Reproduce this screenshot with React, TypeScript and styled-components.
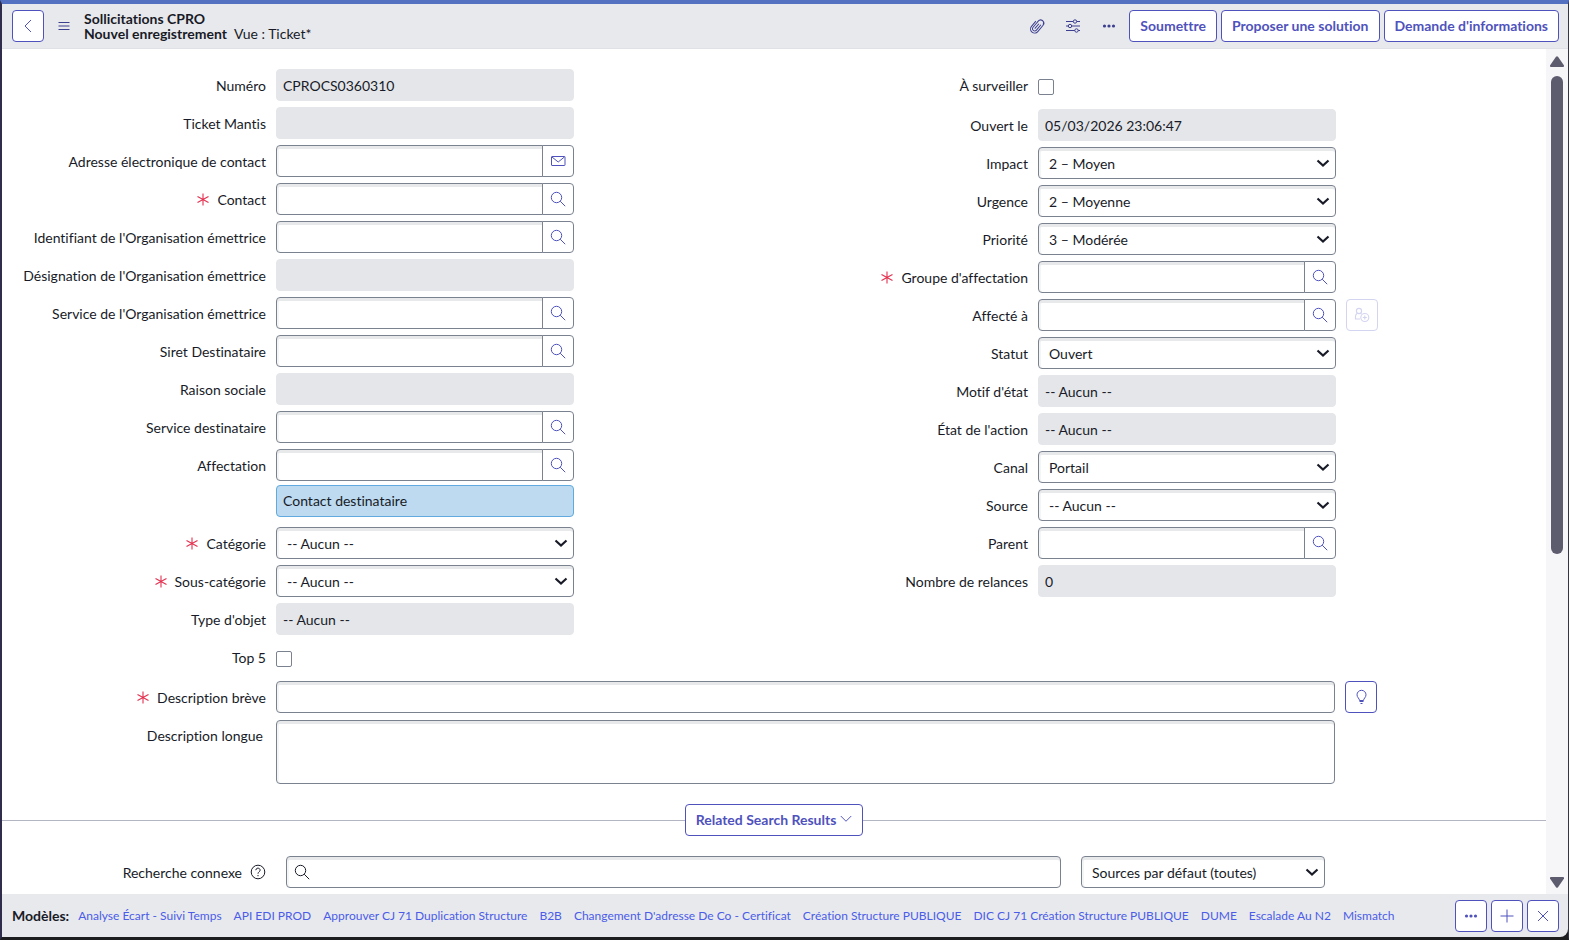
import React, { ReactNode } from "react";
import styled, { createGlobalStyle } from "styled-components";

const ink = "#181b27";
const accent = "#4f52bd";
const link = "#4a5ce8";
const line = "#7b828f";
const readonlyBg = "#e4e6ea";
const barBg = "#e8e9ed";

const GlobalStyle = createGlobalStyle`
  *, *::before, *::after { box-sizing: border-box; }
  body { margin: 0; background: #1d1d22; }
  body, button, input, select, textarea {
    font-family: Lato, "Liberation Sans", sans-serif;
    font-size: 14px;
    font-variant-ligatures: none;
    color: ${ink};
  }
`;

const Frame = styled.div`
  display: flex;
  flex-direction: column;
  height: 100vh;
  border-left: 2px solid #2f2c4c;
  border-right: 1px solid #35363f;
  border-bottom: 3px solid #1d1d20;
  border-top: 4px solid #5470c0;
`;

const Header = styled.header`
  display: flex;
  align-items: center;
  flex: none;
  height: 45px;
  padding: 0 9px 0 10px;
  background: ${barBg};
  border-bottom: 1px solid #dfe1e6;
`;

const Titles = styled.h1`
  margin: 0 auto 0 8px;
  font-size: 14px;
  line-height: 15px;
  font-weight: 700;
`;

const View = styled.span`
  margin-left: 7px;
  font-weight: 400;
`;

const Actions = styled.div`
  display: flex;
  align-items: center;
  gap: 4px;
`;

const Button = styled.button`
  display: inline-flex;
  align-items: center;
  justify-content: center;
  gap: 4px;
  height: 32px;
  padding: 0 10px 2px;
  border: 1px solid ${accent};
  border-radius: 4px;
  background: #fff;
  color: ${accent};
  font-size: 14px;
  font-weight: 700;
  white-space: nowrap;
`;

const SquareButton = styled(Button)`
  flex: none;
  width: 32px;
  padding: 0;
  &:disabled { border-color: #d3d4f0; color: #d3d4f0; }
`;

const BareButton = styled.button`
  display: inline-flex;
  align-items: center;
  justify-content: center;
  width: 32px;
  height: 32px;
  padding: 0;
  border: 0;
  background: none;
  color: #3c3f8f;
`;

const MenuButton = styled(BareButton)`
  width: 24px;
  margin-left: 8px;
`;

const Body = styled.div`
  display: flex;
  flex: 1;
  min-height: 0;
  background: #fff;
`;

const Content = styled.main`
  flex: 1;
  min-width: 0;
  overflow: hidden;
`;

const Form = styled.form`
  padding: 20px 20px 0 0;
`;

const Columns = styled.div`
  display: grid;
  grid-template-columns: 1fr 1fr;
  align-items: start;
`;

const Column = styled.div`
  display: flex;
  flex-direction: column;
  gap: 6px;
`;

const Row = styled.div<{ $wide?: boolean }>`
  display: grid;
  grid-template-columns: ${(p) =>
    p.$wide
      ? "minmax(0, 264fr) minmax(0, 1059fr) minmax(0, 181fr)"
      : "minmax(0, 264fr) minmax(0, 298fr) minmax(0, 180fr)"};
  column-gap: 10px;
  align-items: start;
`;

const Label = styled.label<{ $shift?: boolean }>`
  display: flex;
  justify-content: flex-end;
  align-items: center;
  gap: 8px;
  min-height: ${(p) => (p.$shift ? "30px" : "32px")};
  padding-right: ${(p) => (p.$shift ? "3px" : 0)};
  white-space: nowrap;
`;

const inset = "inset 0 3px 0 #e7e9ea, inset 2px 0 0 #f4f5f5";

const Input = styled.input`
  width: 100%;
  min-width: 0;
  height: 32px;
  padding: 0 6px;
  border: 1px solid ${line};
  border-radius: 4px;
  background: #fff;
  box-shadow: ${inset};
  &:read-only {
    border-color: ${readonlyBg};
    background: ${readonlyBg};
    box-shadow: none;
  }
`;

const Area = styled.textarea`
  display: block;
  width: 100%;
  height: 64px;
  border: 1px solid ${line};
  border-radius: 4px;
  box-shadow: ${inset};
  resize: none;
`;

const Group = styled.div`
  display: flex;
  ${Input} { border-radius: 4px 0 0 4px; }
`;

const Addon = styled.button`
  display: inline-flex;
  align-items: center;
  justify-content: center;
  flex: none;
  width: 32px;
  height: 32px;
  margin-left: -1px;
  padding: 0 1px 0 0;
  border: 1px solid ${line};
  border-radius: 0 4px 4px 0;
  background: #fff;
  color: ${accent};
`;

const SelectBox = styled.div`
  display: grid;
  align-items: center;
  select, svg { grid-area: 1 / 1; }
  svg { justify-self: end; margin-right: 5px; pointer-events: none; color: ${ink}; }
`;

const Select = styled.select`
  appearance: none;
  width: 100%;
  height: 32px;
  padding: 0 28px 0 10px;
  border: 1px solid ${line};
  border-radius: 4px;
  background: #fff;
  box-shadow: ${inset};
`;

const Check = styled.input`
  appearance: none;
  display: block;
  width: 16px;
  height: 16px;
  margin: 10px 0 0;
  border: 1px solid ${line};
  border-radius: 2px;
  background: #fff;
`;

const CheckRow = styled(Row)`
  min-height: 34px;
`;

const Note = styled.div`
  height: 32px;
  padding: 0 6px;
  margin: -2px 0 4px;
  border: 1px solid #60aadf;
  border-radius: 4px;
  background: #bddaf0;
  line-height: 30px;
`;

const WideRows = styled.div`
  display: flex;
  flex-direction: column;
  gap: 7px;
  margin-top: 6px;
`;

const Divider = styled.div`
  display: flex;
  align-items: center;
  margin-top: 20px;
  &::before, &::after { content: ""; flex: 1; border-top: 1px solid #b3b6c2; }
`;

const SearchRow = styled.div`
  display: grid;
  grid-template-columns: minmax(0, 264fr) minmax(0, 775fr) minmax(0, 244fr) minmax(0, 201fr);
  column-gap: 20px;
  margin-top: 20px;
`;

const SearchBox = styled.div`
  display: grid;
  align-items: center;
  input, svg { grid-area: 1 / 1; }
  input { padding-left: 30px; }
  svg { margin-left: 8px; }
`;

const Scrollbar = styled.div`
  display: flex;
  flex-direction: column;
  align-items: center;
  flex: none;
  width: 22px;
  padding: 7px 0 6px;
  background: #f6f6f8;
  color: #5d5b6e;
`;

const Track = styled.div`
  flex: 1;
  width: 12px;
  margin: 9px 0 4px;
`;

const Thumb = styled.div`
  height: 60%;
  border-radius: 6px;
  background: currentColor;
`;

const Footer = styled.footer`
  display: flex;
  align-items: center;
  flex: none;
  height: 43px;
  padding: 0 9px 0 10px;
  background: ${barBg};
  border-radius: 0 0 8px 0;
`;

const FooterTitle = styled.strong`
  font-size: 14px;
`;

const Links = styled.nav`
  display: flex;
  gap: 12px;
  min-width: 0;
  margin: 0 auto 0 9px;
  overflow: hidden;
  a { color: ${link}; font-size: 12px; text-decoration: none; white-space: nowrap; }
`;

type IconProps = { size?: number; w?: number; children: ReactNode };
const Icon = ({ size = 16, w = 1, children }: IconProps) => (
  <svg width={size} height={size} viewBox="0 0 16 16" fill="none" stroke="currentColor" strokeWidth={w} aria-hidden="true">
    {children}
  </svg>
);

const SearchIcon = () => (
  <Icon><circle cx="6.5" cy="6.5" r="5.2" /><path d="M10.2 10.2 15.200 15.200" /></Icon>
);
const MailIcon = () => (
  <Icon><rect x="1.5" y="3.500" width="13.500" height="9" rx="0.5" /><path d="m2 4 6.200 5 6.200-5" /></Icon>
);
const DotsIcon = () => (
  <Icon><g fill="currentColor" stroke="none"><circle cx="3.5" cy="8" r="1.6" /><circle cx="8" cy="8" r="1.6" /><circle cx="12.5" cy="8" r="1.6" /></g></Icon>
);
const Chevron = () => (
  <Icon w={2.2}><path d="m2.5 5.500 5.500 5 5.500-5" /></Icon>
);
const Star = () => (
  <svg width="12" height="13" viewBox="0 0 12 13" stroke="#e5304f" strokeWidth="1.1" aria-label="Obligatoire" role="img">
    <path d="M6 .5v12M.5 3.500l11 6M11.500 3.500l-11 6" />
  </svg>
);

type Kind = "readonly" | "search" | "mail" | "select" | "check";
type Field = { id: string; label: string; kind: Kind; value?: string; required?: boolean; note?: string; assign?: boolean };

const left: Field[] = [
  { id: "number", label: "Numéro", kind: "readonly", value: "CPROCS0360310" },
  { id: "mantis", label: "Ticket Mantis", kind: "readonly" },
  { id: "email", label: "Adresse électronique de contact", kind: "mail" },
  { id: "contact", label: "Contact", kind: "search", required: true },
  { id: "orgId", label: "Identifiant de l'Organisation émettrice", kind: "search" },
  { id: "orgName", label: "Désignation de l'Organisation émettrice", kind: "readonly" },
  { id: "orgService", label: "Service de l'Organisation émettrice", kind: "search" },
  { id: "siret", label: "Siret Destinataire", kind: "search" },
  { id: "company", label: "Raison sociale", kind: "readonly" },
  { id: "destService", label: "Service destinataire", kind: "search" },
  { id: "affectation", label: "Affectation", kind: "search", note: "Contact destinataire" },
  { id: "category", label: "Catégorie", kind: "select", value: "-- Aucun --", required: true },
  { id: "subcategory", label: "Sous-catégorie", kind: "select", value: "-- Aucun --", required: true },
  { id: "objectType", label: "Type d'objet", kind: "readonly", value: "-- Aucun --" },
  { id: "top5", label: "Top 5", kind: "check" },
];

const right: Field[] = [
  { id: "watch", label: "À surveiller", kind: "check" },
  { id: "opened", label: "Ouvert le", kind: "readonly", value: "05/03/2026 23:06:47" },
  { id: "impact", label: "Impact", kind: "select", value: "2 – Moyen" },
  { id: "urgency", label: "Urgence", kind: "select", value: "2 – Moyenne" },
  { id: "priority", label: "Priorité", kind: "select", value: "3 – Modérée" },
  { id: "group", label: "Groupe d'affectation", kind: "search", required: true },
  { id: "assignee", label: "Affecté à", kind: "search", assign: true },
  { id: "status", label: "Statut", kind: "select", value: "Ouvert" },
  { id: "reason", label: "Motif d'état", kind: "readonly", value: "-- Aucun --" },
  { id: "actionState", label: "État de l'action", kind: "readonly", value: "-- Aucun --" },
  { id: "channel", label: "Canal", kind: "select", value: "Portail" },
  { id: "source", label: "Source", kind: "select", value: "-- Aucun --" },
  { id: "parent", label: "Parent", kind: "search" },
  { id: "reminders", label: "Nombre de relances", kind: "readonly", value: "0" },
];

const templates = [
  "Analyse Écart - Suivi Temps", "API EDI PROD", "Approuver CJ 71 Duplication Structure", "B2B",
  "Changement D'adresse De Co - Certificat", "Création Structure PUBLIQUE",
  "DIC CJ 71 Création Structure PUBLIQUE", "DUME", "Escalade Au N2", "Mismatch",
];

const Dropdown = ({ id, value }: { id: string; value?: string }) => (
  <SelectBox>
    <Select id={id}><option>{value}</option></Select>
    <Chevron />
  </SelectBox>
);

const Control = ({ field: { id, kind, value, label } }: { field: Field }) => {
  if (kind === "check") return <Check id={id} type="checkbox" />;
  if (kind === "select") return <Dropdown id={id} value={value} />;
  if (kind === "readonly") return <Input id={id} readOnly value={value ?? ""} />;
  return (
    <Group>
      <Input id={id} />
      <Addon type="button" aria-label={label}>{kind === "mail" ? <MailIcon /> : <SearchIcon />}</Addon>
    </Group>
  );
};

const FieldRow = ({ field }: { field: Field }) => {
  const Wrapper = field.kind === "check" ? CheckRow : Row;
  return (
    <>
      <Wrapper>
        <Label htmlFor={field.id}>{field.required && <Star />}{field.label}</Label>
        <Control field={field} />
        {field.assign && (
          <SquareButton type="button" disabled aria-label="M'affecter">
            <Icon w={1.1}>
              <circle cx="5" cy="4" r="2.600" />
              <path d="M3.300 6.200C2 7 1.500 8.300 1.500 9.500V12H6M6.500 6.200l1 .8" />
              <circle cx="10.800" cy="10.500" r="4" />
              <path d="M10.800 8.500v4M8.800 10.500h4" />
            </Icon>
          </SquareButton>
        )}
      </Wrapper>
      {field.note && <Row><span /><Note>{field.note}</Note></Row>}
    </>
  );
};

export default function App() {
  return (
    <Frame>
      <GlobalStyle />
      <Header>
        <SquareButton aria-label="Retour"><Icon><path d="M11 2 5 8l6 6" /></Icon></SquareButton>
        <MenuButton aria-label="Menu"><Icon><path d="M2.500 4.500h11M2.500 8h11M2.500 11.500h11" /></Icon></MenuButton>
        <Titles>Sollicitations CPRO<br />Nouvel enregistrement<View>Vue : Ticket*</View></Titles>
        <Actions>
          <BareButton aria-label="Pièces jointes">
            <Icon>
              <g transform="rotate(40 8 8)">
                <path d="M10.200 4.500v7a2.200 2.200 0 0 1-4.400 0V3.300a2.900 2.900 0 0 1 5.800-.3M5.800 6V3.500M12.200 3.500v8.300a4.100 4.100 0 0 1-8.200 0V5M8 5v6.500M12.200 3.800A3.200 3.200 0 0 0 5.800 3.500" />
              </g>
            </Icon>
          </BareButton>
          <BareButton aria-label="Personnaliser">
            <Icon><path d="M1 3.500h7.300M11.700 3.500H15M1 8h2.300M6.700 8H15M1 12.500h8.800M13.200 12.500H15" /><circle cx="10" cy="3.500" r="1.700" /><circle cx="5" cy="8" r="1.700" /><circle cx="11.500" cy="12.500" r="1.700" /></Icon>
          </BareButton>
          <BareButton aria-label="Plus d'options"><DotsIcon /></BareButton>
          <Button>Soumettre</Button>
          <Button>Proposer une solution</Button>
          <Button>Demande d'informations</Button>
        </Actions>
      </Header>
      <Body>
        <Content>
          <Form onSubmit={(e) => e.preventDefault()}>
            <Columns>
              <Column>{left.map((f) => <FieldRow key={f.id} field={f} />)}</Column>
              <Column>{right.map((f) => <FieldRow key={f.id} field={f} />)}</Column>
            </Columns>
            <WideRows>
              <Row $wide>
                <Label htmlFor="short"><Star />Description brève</Label>
                <Input id="short" />
                <SquareButton type="button" aria-label="Suggestions">
                  <Icon><path d="M6.500 11.500C6.500 9.500 4 8.500 4 5.800a4.500 4.500 0 0 1 9 0c0 2.700-2.500 3.700-2.500 5.700zM6.500 12.500h4M7.500 14.500h2" /></Icon>
                </SquareButton>
              </Row>
              <Row $wide>
                <Label htmlFor="long" $shift>Description longue</Label>
                <Area id="long" />
              </Row>
            </WideRows>
          </Form>
          <Divider>
            <Button>Related Search Results<Icon size={12} w={1.3}><path d="m1 4 7 7 7-7" /></Icon></Button>
          </Divider>
          <SearchRow>
            <Label htmlFor="related">
              Recherche connexe
              <Icon><circle cx="8" cy="8" r="6.800" /><path d="M5.800 6.200c.2-3 4.500-2.500 4.300.1C10 7.800 8 7.900 8 9.700M8 11v1.200" /></Icon>
            </Label>
            <SearchBox><Input id="related" /><SearchIcon /></SearchBox>
            <SelectBox>
              <Select aria-label="Sources"><option>Sources par défaut (toutes)</option></Select>
              <Chevron />
            </SelectBox>
          </SearchRow>
        </Content>
        <Scrollbar aria-hidden="true">
          <svg width="14" height="11" viewBox="0 0 14 11" fill="currentColor"><path d="M6 .8a1.300 1.300 0 0 1 2 0l6 8.700c.3.800 0 1.500-1 1.500H1c-1 0-1.300-.7-1-1.500z" /></svg>
          <Track><Thumb /></Track>
          <svg width="14" height="11" viewBox="0 0 14 11" fill="currentColor"><path d="M6 10.200a1.300 1.300 0 0 0 2 0l6-8.700c.3-.8 0-1.500-1-1.500H1C0 0-.3.700 0 1.500z" /></svg>
        </Scrollbar>
      </Body>
      <Footer>
        <FooterTitle>Modèles:</FooterTitle>
        <Links>{templates.map((t) => <a key={t} href="#">{t}</a>)}</Links>
        <Actions>
          <SquareButton aria-label="Plus de modèles"><DotsIcon /></SquareButton>
          <SquareButton aria-label="Ajouter"><Icon><path d="M8 1.500v13M1.500 8h13" /></Icon></SquareButton>
          <SquareButton aria-label="Fermer"><Icon><path d="m3 3 10 10M13 3 3 13" /></Icon></SquareButton>
        </Actions>
      </Footer>
    </Frame>
  );
}
